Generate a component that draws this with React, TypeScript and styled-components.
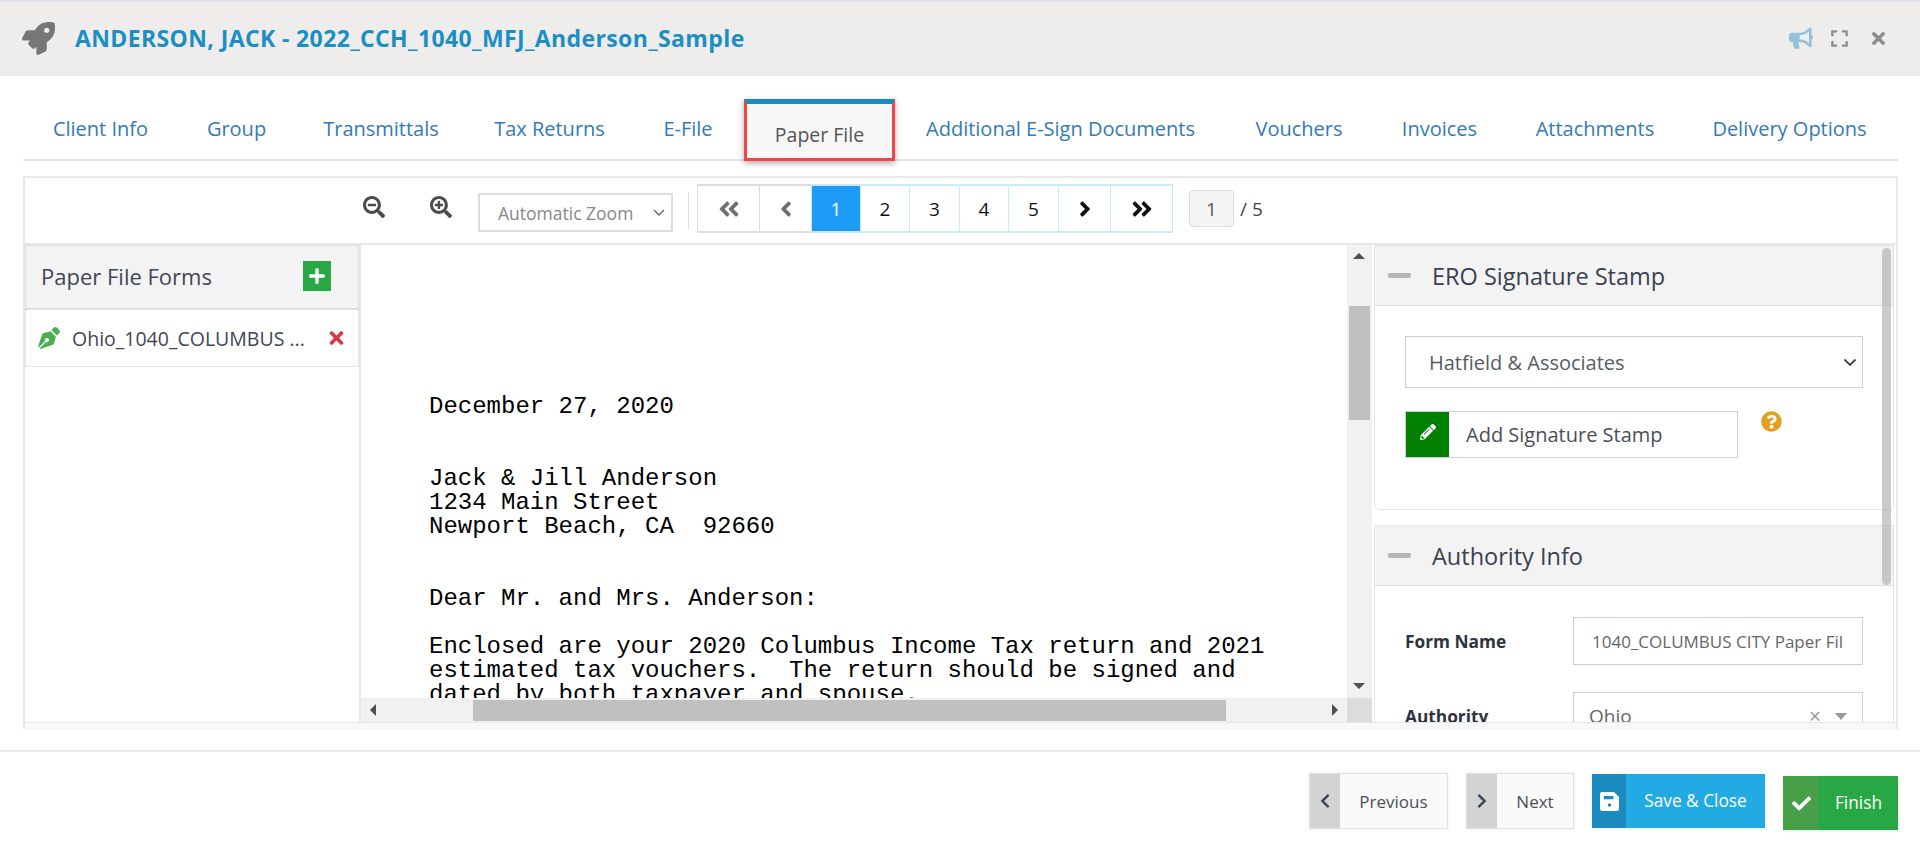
import React from "react";
import styled, { createGlobalStyle } from "styled-components";
import {
  FaRocket, FaBullhorn, FaExpand, FaTimes, FaSearchMinus, FaSearchPlus,
  FaAngleDoubleLeft, FaAngleLeft, FaAngleRight, FaAngleDoubleRight, FaPlus,
  FaPenNib, FaPencilAlt, FaQuestionCircle, FaCheck, FaChevronLeft, FaChevronRight,
} from "react-icons/fa";

const Global = createGlobalStyle`
  * { box-sizing: border-box; }
  html, body { margin: 0; padding: 0; background: #fff; height: 854px; overflow: hidden; }
  body { font-family: "Open Sans", "Noto Sans", Arial, sans-serif; color: #3f4756; }
`;

const Page = styled.div`width: 1920px; height: 854px; display: flex; flex-direction: column; overflow: hidden;`;

const Header = styled.header`
  height: 76px; flex: none; background: #efecec; border-top: 2px solid #dfe1e8;
  display: flex; align-items: center; padding: 0 32px 2px 22px;
`;
const Rocket = styled(FaRocket)`width: 33px; height: 33px; color: #777; flex: none;`;
const Title = styled.h1`
  margin: 0 0 0 20px; flex: 1; font-size: 23px; font-weight: 700; color: #1b8fc4; letter-spacing: 0.38px; white-space: nowrap;
`;
const HeadIcons = styled.div`display: flex; align-items: center; gap: 17px;`;
const Horn = styled(FaBullhorn)`width: 24px; height: 22px; color: #93c1d9;`;
const Expand = styled(FaExpand)`width: 19px; height: 19px; color: #8d8d8d;`;
const Close = styled(FaTimes)`width: 19px; height: 19px; color: #8d8d8d; margin-left: 3px;`;

const Tabs = styled.nav`
  flex: none; height: 85px; margin: 0 22px 15px 23px; padding-top: 23px; display: flex; align-items: flex-start;
  border-bottom: 2px solid #e1e3ea;
`;
const Tab = styled.a<{ $active?: boolean; $w: number }>`
  width: ${p => p.$w}px; flex: none;
  height: ${p => (p.$active ? "62px" : "58px")};
  display: flex; align-items: center; justify-content: center; white-space: nowrap;
  font-size: 20px;
  color: ${p => (p.$active ? "#555" : "#337ab7")};
  ${p => p.$active && `
    background: #f7f7f7; padding-top: 6px; font-size: 19.5px;
    border: 3px solid #f2444a; border-top: 5px solid #1a8cc0; box-shadow: 0 2px 6px rgba(0,0,0,.35);
  `}
`;

const Viewer = styled.section`
  flex: none; height: 546px; margin: 0 22px 0 23px; border: 2px solid #e8e8e8; border-bottom: 0;
  display: flex; flex-direction: column; background: #fff;
`;
const Toolbar = styled.div`
  flex: none; height: 67px; padding: 5px 0 0 338px; display: flex; align-items: flex-start;
  border-bottom: 2px solid #e8e8e8;
`;
const ZoomBtn = styled.button`
  border: 0; background: none; padding: 0; width: 22px; height: 22px; margin: 13px 45px 0 0; color: #4c4c4c; display: flex;
  & svg { width: 22px; height: 22px; }
`;
const ZoomBtnLast = styled(ZoomBtn)`margin-right: 26px;`;
const ZoomSelect = styled.div`
  width: 195px; height: 39px; margin-top: 10px; border: 2px solid #ddd; display: flex; align-items: center;
  justify-content: space-between; padding: 0 6px 0 18px; font-size: 17.5px; color: #888; white-space: nowrap;
`;
const Sep = styled.div`width: 1px; height: 37px; margin: 9px 9px 0 15px; background: #ddd;`;
const Pager = styled.div`display: flex; height: 49px; margin-top: 1px;`;
const PageCell = styled.div<{ $w: number; $gray?: boolean; $active?: boolean; $dim?: boolean }>`
  width: ${p => p.$w}px; height: 49px; display: flex; align-items: center; justify-content: center;
  border: 1px solid ${p => (p.$gray ? "#ddd" : "#c9eaf8")}; margin-left: -1px; font-size: 19px;
  border-width: 2px 1px;
  color: ${p => (p.$active ? "#fff" : p.$dim ? "#6f6f6f" : "#111")};
  background: ${p => (p.$active ? "#1e9bf7" : "#fff")};
  & svg { width: 24px; height: 24px; }
`;
const PageNo = styled.div`
  width: 45px; height: 37px; margin: 7px 0 0 16px; border: 1px solid #ddd; border-radius: 4px; background: #f5f5f5; padding-top: 1px;
  font-size: 19px; color: #555; display: flex; align-items: center; justify-content: center;
`;
const PageTotal = styled.div`margin: 8px 0 0 6px; height: 37px; line-height: 37px; font-size: 19px; color: #444;`;

const Body = styled.div`flex: 1; min-height: 0; display: flex; overflow: hidden; position: relative;`;

const Forms = styled.aside`flex: none; width: 336px; border-right: 2px solid #e8e8e8;`;
const FormsHead = styled.div`
  height: 64px; background: #f3f3f3; border: 1px solid #ddd; display: flex; align-items: center; justify-content: space-between;
  padding: 0 27px 2px 15px;
`;
const FormsTitle = styled.div`font-size: 22px; color: #3f4756; white-space: nowrap;`;
const AddBtn = styled.button`
  width: 28px; height: 30px; border: 0; padding: 0; background: #28a745; color: #fff; display: flex; align-items: center; justify-content: center;
  & svg { width: 18px; height: 18px; }
`;
const FormRow = styled.div`
  height: 58px; border: 1px dotted #ccc; display: flex; align-items: center; padding: 0 13px 0 12px;
`;
const Nib = styled(FaPenNib)`width: 22px; height: 22px; color: #4caf50; flex: none; margin-right: 12px;`;
const FormName = styled.div`flex: 1; font-size: 19.5px; color: #3f4756; white-space: nowrap;`;
const Del = styled(FaTimes)`width: 17px; height: 20px; color: #dc3545; flex: none;`;

const DocArea = styled.div`flex: none; width: 1011px; display: grid; grid-template-columns: 986px 25px; grid-template-rows: 453px 24px;`;
const DocPage = styled.pre`
  margin: 0; padding: 150px 0 0 68px; overflow: hidden; background: #fff;
  font-family: "Liberation Mono", "Courier New", monospace; font-size: 24px; line-height: 24px; color: #000;
`;
const VTrack = styled.div`background: #f1f1f1; display: flex; flex-direction: column; align-items: center; position: relative;`;
const Arrow = styled.span<{ $dir: "up" | "down" | "left" | "right" }>`
  width: 0; height: 0; position: absolute;
  ${p => p.$dir === "up" && "top: 8px; left: 6px; border: 6px solid transparent; border-top: 0; border-bottom: 6px solid #505050;"}
  ${p => p.$dir === "down" && "bottom: 9px; left: 6px; border: 6px solid transparent; border-bottom: 0; border-top: 6px solid #505050;"}
  ${p => p.$dir === "left" && "left: 9px; top: 6px; border: 6px solid transparent; border-left: 0; border-right: 6px solid #505050;"}
  ${p => p.$dir === "right" && "right: 9px; top: 6px; border: 6px solid transparent; border-right: 0; border-left: 6px solid #505050;"}
`;
const VThumb = styled.div`width: 21px; height: 114px; margin-top: 61px; background: #c0c0c0;`;
const HTrack = styled.div`background: #f1f1f1; position: relative; display: flex; align-items: center; padding-left: 112px;`;
const HThumb = styled.div`width: 753px; height: 21px; background: #c0c0c0;`;
const Corner = styled.div`background: #dcdcdc;`;

const Side = styled.div`flex: 1; min-width: 0; position: relative; overflow: hidden; padding-left: 2px;`;
const OverBar = styled.div`position: absolute; top: 3px; right: 5px; width: 9px; height: 337px; border-radius: 5px; background: rgba(175,175,175,.65);`;
const Card = styled.div`
  margin: 0 2px 15px 0; border: 1px solid #e4e4e4; border-radius: 0 0 6px 6px; background: #fff;
`;
const CardHead = styled.div`
  height: 60px; background: #f3f3f3; border-bottom: 1px solid #e0e0e0; display: flex; align-items: center; padding: 0 0 0 13px;
`;
const Minus = styled.span`width: 23px; height: 5px; background: #b5b5b5; border-radius: 2px; margin-right: 21px; flex: none;`;
const CardTitle = styled.div`font-size: 23.5px; font-weight: 500; color: #3a4150; white-space: nowrap;`;
const CardBodyA = styled.div`height: 203px; padding: 30px 30px 0 30px; display: flex; flex-direction: column; gap: 23px;`;
const StampSelect = styled.div`
  height: 52px; border: 1px solid #ccd0d6; display: flex; align-items: center; justify-content: space-between;
  padding: 0 5px 0 23px; font-size: 20px; color: #555c66;
`;
const StampRow = styled.div`display: flex; align-items: flex-start;`;
const StampBtn = styled.div`
  width: 333px; height: 47px; border: 1px solid #ccd0d6; display: flex; align-items: center; font-size: 20px; color: #4a4f57;
`;
const StampIcon = styled.span`
  width: 43px; height: 100%; background: #008000; color: #fff; display: flex; align-items: center; justify-content: center; margin-right: 17px;
  padding-bottom: 6px;
  & svg { width: 16px; height: 16px; }
`;
const Help = styled(FaQuestionCircle)`width: 21px; height: 21px; color: #e0a020; margin-left: 23px;`;
const CardBodyB = styled.div`padding: 31px 30px 0 30px; display: grid; grid-template-columns: 168px minmax(0, 1fr); row-gap: 27px; align-items: center;`;
const Label = styled.div`font-size: 17.3px; font-weight: 700; color: #2d3340; white-space: nowrap;`;
const TextBox = styled.div`
  height: 48px; border: 1px solid #ccd0d6; display: flex; align-items: center; padding: 0 18px; white-space: nowrap;
  font-size: 17px; color: #666; min-width: 0;
`;
const TextClip = styled.span`display: block; overflow: hidden; flex: 1; min-width: 0;`;
const ComboBox = styled(TextBox)`justify-content: space-between; padding: 0 15px 0 15px; font-size: 19px;`;
const ComboTail = styled.span`display: flex; align-items: center; gap: 14px; color: #999; font-size: 21px;`;
const Caret = styled.span`width: 0; height: 0; border: 6px solid transparent; border-bottom: 0; border-top: 7px solid #999;`;
const BottomStrip = styled.div`flex: none; height: 7px; margin: 0 22px 21px 23px; background: #f8f8f8; border-top: 1px solid #e8e8e8; border-left: 2px solid #e8e8e8; border-right: 2px solid #e8e8e8;`;

const Footer = styled.footer`
  flex: 1; border-top: 2px solid #e8e8e8; display: flex; align-items: flex-start; justify-content: flex-end; padding: 21px 22px 0 0;
`;
const NavBtn = styled.button<{ $w: number; $ml: number }>`
  width: ${p => p.$w}px; height: 56px; margin-left: ${p => p.$ml}px; padding: 0; background: #fafafa; border: 1px solid #e0e0e0;
  display: flex; align-items: stretch; font: inherit; font-size: 17px; color: #4a4f57; box-shadow: 0 0 3px rgba(0,0,0,.08);
`;
const NavIcon = styled.span`
  width: 30px; background: #d3d3d3; color: #3f4756; display: flex; align-items: center; justify-content: center; flex: none;
  & svg { width: 14px; height: 16px; }
`;
const NavText = styled.span`flex: 1; display: flex; align-items: center; justify-content: center;`;
const ActionBtn = styled.button<{ $bg: string; $ml: number; $w: number; $top: number }>`
  width: ${p => p.$w}px; height: 54px; margin: ${p => p.$top}px 0 0 ${p => p.$ml}px; padding: 0; border: 0; display: flex; align-items: stretch;
  background: ${p => p.$bg}; color: #fff; font: inherit; font-size: 17.3px; box-shadow: 0 1px 3px rgba(0,0,0,.1);
`;
const ActionIcon = styled.span<{ $bg: string; $w: number }>`
  width: ${p => p.$w}px; flex: none; background: ${p => p.$bg}; display: flex; align-items: center; justify-content: center;
  & svg { width: 19px; height: 19px; }
`;
const ActionText = styled.span`flex: 1; display: flex; align-items: center; justify-content: center; padding-bottom: 2px;`;

const Chevron = () => (
  <svg width="14" height="9" viewBox="0 0 14 9" fill="none" stroke="#444" strokeWidth="1.8"><path d="M1.5 1.5 7 7l5.5-5.5" /></svg>
);
const ZoomChevron = () => (
  <svg width="12" height="8" viewBox="0 0 12 8" fill="none" stroke="#666" strokeWidth="1.4"><path d="M1 1l5 5 5-5" /></svg>
);
const SaveGlyph = () => (
  <svg viewBox="0 0 17 17">
    <path fill="#fff" fillRule="evenodd" d="M2 0h10.5L17 4.5V15a2 2 0 0 1-2 2H2a2 2 0 0 1-2-2V2a2 2 0 0 1 2-2zM3.5 3.5v3h8.5v-3zM8.5 10a1.6 1.6 0 1 0 0 3.2 1.6 1.6 0 0 0 0-3.2z" />
  </svg>
);

const doc = `December 27, 2020


Jack & Jill Anderson
1234 Main Street
Newport Beach, CA  92660


Dear Mr. and Mrs. Anderson:

Enclosed are your 2020 Columbus Income Tax return and 2021
estimated tax vouchers.  The return should be signed and
dated by both taxpayer and spouse.`;

const tabs = [
  { t: "Client Info", w: 155 }, { t: "Group", w: 117 }, { t: "Transmittals", w: 172 }, { t: "Tax Returns", w: 165 },
  { t: "E-File", w: 112 }, { t: "Paper File", w: 151 }, { t: "Additional E-Sign Documents", w: 331 }, { t: "Vouchers", w: 146 },
  { t: "Invoices", w: 135 }, { t: "Attachments", w: 176 }, { t: "Delivery Options", w: 213 },
];
const cells = [
  { w: 63, c: <FaAngleDoubleLeft />, gray: true, dim: true },
  { w: 53, c: <FaAngleLeft />, gray: true, dim: true },
  { w: 50, c: "1", active: true },
  { w: 50, c: "2" },
  { w: 51, c: "3" },
  { w: 50, c: "4" },
  { w: 51, c: "5" },
  { w: 53, c: <FaAngleRight /> },
  { w: 63, c: <FaAngleDoubleRight /> },
];

export default function App() {
  return (
    <Page>
      <Global />
      <Header>
        <Rocket />
        <Title>ANDERSON, JACK - 2022_CCH_1040_MFJ_Anderson_Sample</Title>
        <HeadIcons><Horn /><Expand /><Close /></HeadIcons>
      </Header>
      <Tabs>
        {tabs.map(({ t, w }) => <Tab key={t} $w={w} $active={t === "Paper File"}>{t}</Tab>)}
      </Tabs>
      <Viewer>
        <Toolbar>
          <ZoomBtn><FaSearchMinus /></ZoomBtn>
          <ZoomBtnLast><FaSearchPlus /></ZoomBtnLast>
          <ZoomSelect>Automatic Zoom <ZoomChevron /></ZoomSelect>
          <Sep />
          <Pager>
            {cells.map((c, i) => <PageCell key={i} $w={c.w} $gray={c.gray} $active={c.active} $dim={c.dim}>{c.c}</PageCell>)}
          </Pager>
          <PageNo>1</PageNo>
          <PageTotal>/ 5</PageTotal>
        </Toolbar>
        <Body>
          <Forms>
            <FormsHead><FormsTitle>Paper File Forms</FormsTitle><AddBtn><FaPlus /></AddBtn></FormsHead>
            <FormRow><Nib /><FormName>Ohio_1040_COLUMBUS ...</FormName><Del /></FormRow>
          </Forms>
          <DocArea>
            <DocPage>{doc}</DocPage>
            <VTrack><Arrow $dir="up" /><VThumb /><Arrow $dir="down" /></VTrack>
            <HTrack><Arrow $dir="left" /><HThumb /><Arrow $dir="right" /></HTrack>
            <Corner />
          </DocArea>
          <Side>
            <Card>
              <CardHead><Minus /><CardTitle>ERO Signature Stamp</CardTitle></CardHead>
              <CardBodyA>
                <StampSelect>Hatfield &amp; Associates <Chevron /></StampSelect>
                <StampRow>
                  <StampBtn><StampIcon><FaPencilAlt /></StampIcon>Add Signature Stamp</StampBtn>
                  <Help />
                </StampRow>
              </CardBodyA>
            </Card>
            <Card>
              <CardHead><Minus /><CardTitle>Authority Info</CardTitle></CardHead>
              <CardBodyB>
                <Label>Form Name</Label>
                <TextBox><TextClip>1040_COLUMBUS CITY Paper File</TextClip></TextBox>
                <Label>Authority</Label>
                <ComboBox>Ohio<ComboTail>× <Caret /></ComboTail></ComboBox>
              </CardBodyB>
            </Card>
            <OverBar />
          </Side>
        </Body>
      </Viewer>
      <BottomStrip />
      <Footer>
        <NavBtn $w={139} $ml={0}><NavIcon><FaChevronLeft /></NavIcon><NavText>Previous</NavText></NavBtn>
        <NavBtn $w={108} $ml={18}><NavIcon><FaChevronRight /></NavIcon><NavText>Next</NavText></NavBtn>
        <ActionBtn $bg="#22aae3" $ml={18} $w={173} $top={1}><ActionIcon $bg="#1a8cc0" $w={34}><SaveGlyph /></ActionIcon><ActionText>Save &amp; Close</ActionText></ActionBtn>
        <ActionBtn $bg="#28a745" $ml={18} $w={115} $top={3}><ActionIcon $bg="#479f47" $w={36}><FaCheck /></ActionIcon><ActionText>Finish</ActionText></ActionBtn>
      </Footer>
    </Page>
  );
}
